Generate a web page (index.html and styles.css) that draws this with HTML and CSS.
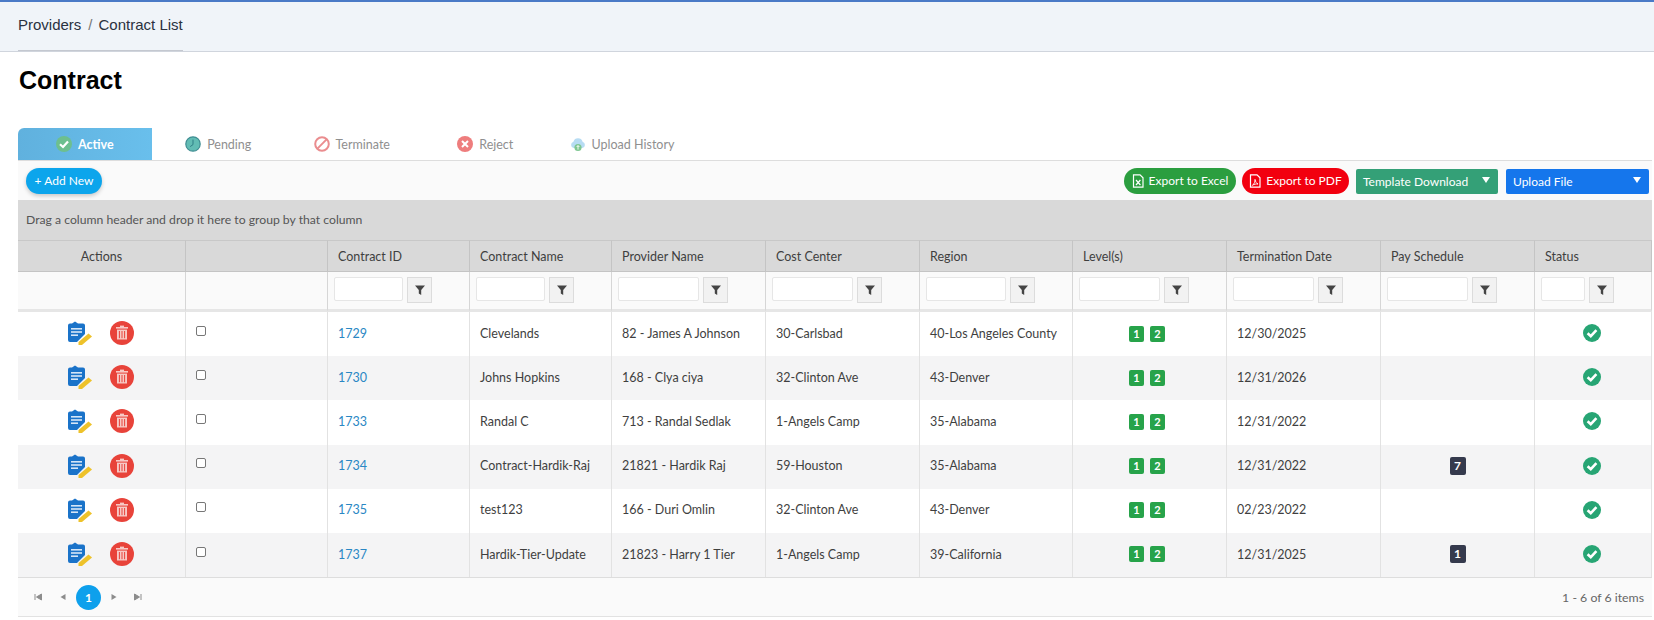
FILE: index.html
```html
<!DOCTYPE html>
<html lang="en">
<head>
<meta charset="utf-8">
<title>Contract List</title>
<link rel="stylesheet" href="styles.css">
</head>
<body>
<svg class="defs" width="0" height="0" aria-hidden="true">
  <symbol id="i-edit" viewBox="0 0 24 24">
    <path d="M7 0.5 L10 2.5 H15 A2 2 0 0 1 17 4.5 V13 L9 21 H2 A2 2 0 0 1 0 19 V4.5 A2 2 0 0 1 2 2.5 H4 Z" fill="#1a73c9"/>
    <rect x="3" y="7" width="11" height="1.6" fill="#d5e6f7"/>
    <rect x="3" y="10.2" width="11" height="1.6" fill="#d5e6f7"/>
    <rect x="3" y="13.4" width="7" height="1.6" fill="#d5e6f7"/>
    <path d="M20.5 12.5 L24 15.5 L14 24 L10.5 24 L10.5 21 Z" fill="#eec22a"/>
  </symbol>
  <symbol id="i-del" viewBox="0 0 24 24">
    <circle cx="12" cy="12" r="12" fill="#e8433a"/>
    <rect x="6" y="6" width="12" height="1.6" fill="#f7c9c5"/>
    <rect x="10" y="4.6" width="4" height="1.6" fill="#f7c9c5"/>
    <path d="M7 8.6 H17 V18.5 H7 Z" fill="#f7c9c5"/>
    <path d="M9.4 10 V17.2 M12 10 V17.2 M14.6 10 V17.2" stroke="#e8433a" stroke-width="1"/>
  </symbol>
  <symbol id="i-filter" viewBox="0 0 12 12">
    <path d="M1 1.5 H11 L7.2 6 V11 L4.8 9.6 V6 Z" fill="#444"/>
  </symbol>
  <symbol id="i-ok" viewBox="0 0 18 18">
    <circle cx="9" cy="9" r="9" fill="#27a574"/>
    <path d="M4.6 9.2 L7.8 12.2 L13.4 6.2" fill="none" stroke="#fff" stroke-width="2.6"/>
  </symbol>
  <symbol id="i-file" viewBox="0 0 12 14">
    <path d="M1.5 .8 H8 L11 3.8 V13.2 H1.5 Z" fill="none" stroke="#fff" stroke-width="1.2"/>
    <path d="M4 6 L8.4 11 M8.4 6 L4 11" stroke="#fff" stroke-width="1.2"/>
  </symbol>
  <symbol id="i-pdf" viewBox="0 0 12 14">
    <path d="M1.5 .8 H8 L11 3.8 V13.2 H1.5 Z" fill="none" stroke="#fff" stroke-width="1.2"/>
    <path d="M3.4 11.4 C5.4 9.6 6.2 7.6 6 5.4 C6.6 8 7.4 9.4 9 10 C7 9.8 5 10.2 3.4 11.4 Z" fill="none" stroke="#fff" stroke-width=".9"/>
  </symbol>
</svg>

<nav class="topbar">
  <div class="crumbs"><a class="crumb">Providers</a><span class="sep">/</span><a class="crumb">Contract List</a></div>
</nav>

<main class="page">
  <h1 class="title">Contract</h1>

  <div class="tabs">
    <a class="tab tab-on">
      <svg class="tab-ico" viewBox="0 0 16 16"><circle cx="8" cy="8" r="8" fill="#6dbf8f"/><path d="M4 8.3 L7 11 L12 5.4" fill="none" stroke="#fff" stroke-width="2.2"/></svg>Active</a>
    <a class="tab">
      <svg class="tab-ico" viewBox="0 0 16 16"><circle cx="8" cy="8" r="7.2" fill="#62bcb4" stroke="#3f8d92" stroke-width="1.2"/><path d="M8 3.6 V8.6 L5.2 10.6" fill="none" stroke="#2f7f86" stroke-width="1"/></svg>Pending</a>
    <a class="tab">
      <svg class="tab-ico" viewBox="0 0 16 16"><circle cx="8" cy="8" r="6.8" fill="none" stroke="#ea8d8f" stroke-width="2"/><path d="M3.4 12.6 L12.6 3.4" stroke="#ea8d8f" stroke-width="2"/></svg>Terminate</a>
    <a class="tab">
      <svg class="tab-ico" viewBox="0 0 16 16"><circle cx="8" cy="8" r="8" fill="#ee7d7d"/><path d="M5 5 L11 11 M11 5 L5 11" stroke="#fff" stroke-width="2"/></svg>Reject</a>
    <a class="tab tab-wide">
      <svg class="tab-ico" viewBox="0 0 16 16"><path d="M3.6 12 A3.2 3.2 0 0 1 3.4 5.8 A4.8 4.8 0 0 1 12.6 5.8 A3.2 3.2 0 0 1 12.4 12 Z" fill="#b7dcf3"/><circle cx="8" cy="11.5" r="3.6" fill="#7fc792"/><path d="M8 13.6 V9.6 M6.6 11 L8 9.6 L9.4 11" fill="none" stroke="#fff" stroke-width=".9"/></svg>Upload History</a>
  </div>

  <div class="toolbar">
    <button class="pill pill-add">+ Add New</button>
    <div class="toolbar-right">
      <button class="pill pill-excel"><svg class="btn-ico"><use href="#i-file"/></svg>Export to Excel</button>
      <button class="pill pill-pdf"><svg class="btn-ico"><use href="#i-pdf"/></svg>Export to PDF</button>
      <button class="drop drop-tpl">Template Download<span class="caret"></span></button>
      <button class="drop drop-up">Upload File<span class="caret"></span></button>
    </div>
  </div>

  <div class="group-bar">Drag a column header and drop it here to group by that column</div>

  <table class="grid">
    <colgroup>
      <col class="c-act"><col class="c-chk"><col class="c-id"><col class="c-name"><col class="c-std">
      <col class="c-std"><col class="c-reg"><col class="c-std"><col class="c-std"><col class="c-std"><col class="c-last">
    </colgroup>
    <thead>
      <tr class="head">
        <th class="center">Actions</th><th></th><th>Contract ID</th><th>Contract Name</th><th>Provider Name</th><th>Cost Center</th><th>Region</th><th>Level(s)</th><th>Termination Date</th><th>Pay Schedule</th><th>Status</th>
      </tr>
      <tr class="filters">
        <td></td><td></td>
        <td><div class="flt"><input class="flt-in"><span class="flt-btn"><svg class="flt-ico"><use href="#i-filter"/></svg></span></div></td>
        <td><div class="flt"><input class="flt-in"><span class="flt-btn"><svg class="flt-ico"><use href="#i-filter"/></svg></span></div></td>
        <td><div class="flt"><input class="flt-in"><span class="flt-btn"><svg class="flt-ico"><use href="#i-filter"/></svg></span></div></td>
        <td><div class="flt"><input class="flt-in"><span class="flt-btn"><svg class="flt-ico"><use href="#i-filter"/></svg></span></div></td>
        <td><div class="flt"><input class="flt-in"><span class="flt-btn"><svg class="flt-ico"><use href="#i-filter"/></svg></span></div></td>
        <td><div class="flt"><input class="flt-in"><span class="flt-btn"><svg class="flt-ico"><use href="#i-filter"/></svg></span></div></td>
        <td><div class="flt"><input class="flt-in"><span class="flt-btn"><svg class="flt-ico"><use href="#i-filter"/></svg></span></div></td>
        <td><div class="flt"><input class="flt-in"><span class="flt-btn"><svg class="flt-ico"><use href="#i-filter"/></svg></span></div></td>
        <td><div class="flt"><input class="flt-in"><span class="flt-btn"><svg class="flt-ico"><use href="#i-filter"/></svg></span></div></td>
      </tr>
    </thead>
    <tbody>
      <tr>
        <td><div class="acts"><svg class="act"><use href="#i-edit"/></svg><svg class="act"><use href="#i-del"/></svg></div></td>
        <td class="chk-cell"><input type="checkbox" class="chk"></td>
        <td><a class="link">1729</a></td><td>Clevelands</td><td>82 - James A Johnson</td><td>30-Carlsbad</td><td>40-Los Angeles County</td>
        <td class="center lvl-cell"><span class="lvl">1</span><span class="lvl">2</span></td><td>12/30/2025</td><td class="center"></td>
        <td class="center ok-cell"><svg class="ok"><use href="#i-ok"/></svg></td>
      </tr>
      <tr>
        <td><div class="acts"><svg class="act"><use href="#i-edit"/></svg><svg class="act"><use href="#i-del"/></svg></div></td>
        <td class="chk-cell"><input type="checkbox" class="chk"></td>
        <td><a class="link">1730</a></td><td>Johns Hopkins</td><td>168 - Clya ciya</td><td>32-Clinton Ave</td><td>43-Denver</td>
        <td class="center lvl-cell"><span class="lvl">1</span><span class="lvl">2</span></td><td>12/31/2026</td><td class="center"></td>
        <td class="center ok-cell"><svg class="ok"><use href="#i-ok"/></svg></td>
      </tr>
      <tr>
        <td><div class="acts"><svg class="act"><use href="#i-edit"/></svg><svg class="act"><use href="#i-del"/></svg></div></td>
        <td class="chk-cell"><input type="checkbox" class="chk"></td>
        <td><a class="link">1733</a></td><td>Randal C</td><td>713 - Randal Sedlak</td><td>1-Angels Camp</td><td>35-Alabama</td>
        <td class="center lvl-cell"><span class="lvl">1</span><span class="lvl">2</span></td><td>12/31/2022</td><td class="center"></td>
        <td class="center ok-cell"><svg class="ok"><use href="#i-ok"/></svg></td>
      </tr>
      <tr>
        <td><div class="acts"><svg class="act"><use href="#i-edit"/></svg><svg class="act"><use href="#i-del"/></svg></div></td>
        <td class="chk-cell"><input type="checkbox" class="chk"></td>
        <td><a class="link">1734</a></td><td>Contract-Hardik-Raj</td><td>21821 - Hardik Raj</td><td>59-Houston</td><td>35-Alabama</td>
        <td class="center lvl-cell"><span class="lvl">1</span><span class="lvl">2</span></td><td>12/31/2022</td><td class="center"><span class="pay">7</span></td>
        <td class="center ok-cell"><svg class="ok"><use href="#i-ok"/></svg></td>
      </tr>
      <tr>
        <td><div class="acts"><svg class="act"><use href="#i-edit"/></svg><svg class="act"><use href="#i-del"/></svg></div></td>
        <td class="chk-cell"><input type="checkbox" class="chk"></td>
        <td><a class="link">1735</a></td><td>test123</td><td>166 - Duri Omlin</td><td>32-Clinton Ave</td><td>43-Denver</td>
        <td class="center lvl-cell"><span class="lvl">1</span><span class="lvl">2</span></td><td>02/23/2022</td><td class="center"></td>
        <td class="center ok-cell"><svg class="ok"><use href="#i-ok"/></svg></td>
      </tr>
      <tr>
        <td><div class="acts"><svg class="act"><use href="#i-edit"/></svg><svg class="act"><use href="#i-del"/></svg></div></td>
        <td class="chk-cell"><input type="checkbox" class="chk"></td>
        <td><a class="link">1737</a></td><td>Hardik-Tier-Update</td><td>21823 - Harry 1 Tier</td><td>1-Angels Camp</td><td>39-California</td>
        <td class="center lvl-cell"><span class="lvl">1</span><span class="lvl">2</span></td><td>12/31/2025</td><td class="center"><span class="pay">1</span></td>
        <td class="center ok-cell"><svg class="ok"><use href="#i-ok"/></svg></td>
      </tr>
    </tbody>
  </table>

  <div class="pager">
    <div class="pager-nav">
      <svg class="pg" viewBox="0 0 8 8"><path d="M1 1 V7 M7.5 1 L2.5 4 L7.5 7 Z" fill="#8c8c8c" stroke="#8c8c8c"/></svg>
      <svg class="pg" viewBox="0 0 8 8"><path d="M6.5 1 L1.5 4 L6.5 7 Z" fill="#8c8c8c"/></svg>
      <span class="pg-cur">1</span>
      <svg class="pg" viewBox="0 0 8 8"><path d="M1.5 1 L6.5 4 L1.5 7 Z" fill="#8c8c8c"/></svg>
      <svg class="pg" viewBox="0 0 8 8"><path d="M7 1 V7 M.5 1 L5.5 4 L.5 7 Z" fill="#8c8c8c" stroke="#8c8c8c"/></svg>
    </div>
    <span class="pager-info">1 - 6 of 6 items</span>
  </div>
</main>
</body>
</html>
```
FILE: styles.css
```css
* { box-sizing: border-box; }

html, body { margin: 0; background: #fff; }

body {
  font-family: "Lato", "Liberation Sans", sans-serif;
  font-size: 12.5px;
  color: #444;
  height: 620px;
  overflow: hidden;
}

.defs { display: block; height: 0; }

.topbar {
  height: 52px;
  background: #f0f4f9;
  border-top: 2px solid #4a7ac7;
  border-bottom: 1px solid #d0d5dd;
  padding-left: 18px;
}

.crumbs {
  display: inline-flex;
  align-items: flex-start;
  height: 49px;
  padding: 14px 0 0 0;
  border-bottom: 1px solid #c4c8d0;
  font-family: "Liberation Sans", sans-serif;
  font-size: 15px;
  color: #2a3140;
}

.sep { margin: 0 6px 0 7px; color: #777; }

.page { padding: 0 2px 0 18px; }

.title {
  margin: 0;
  padding: 14px 0 0 1px;
  height: 76px;
  font-family: "Liberation Sans", sans-serif;
  font-size: 25px;
  line-height: 28px;
  font-weight: 700;
  color: #000;
}

.tabs {
  display: flex;
  height: 33px;
  border-bottom: 1px solid #ddd;
}

.tab {
  width: 133.5px;
  height: 32px;
  display: flex;
  align-items: center;
  justify-content: center;
  gap: 6px;
  color: #8f8f8f;
  font-size: 12.5px;
}

.tab-wide { width: 140px; }

.tab-on {
  background: linear-gradient(90deg, #60b1de, #69bfec);
  color: #fff;
  font-weight: 700;
  border-radius: 6px 0 0 0;
}

.tab-ico { width: 16px; height: 16px; flex: none; }

.toolbar {
  height: 39px;
  padding: 7px 3px 0 8px;
  display: flex;
  justify-content: space-between;
  align-items: flex-start;
  background: #fafafa;
}

.toolbar-right { display: flex; align-items: flex-start; }

.pill, .drop {
  font-family: inherit;
  font-size: 12px;
  color: #fff;
  border: 0;
  padding: 0 0 1px;
  display: flex;
  align-items: center;
}

.pill {
  height: 26px;
  border-radius: 13px;
  justify-content: center;
}

.pill-add {
  width: 76px;
  background: #0ca5ec;
  box-shadow: 0 2px 4px rgba(0, 0, 0, .2);
}

.pill-excel { width: 112px; background: #2b9e3f; margin-right: 6px; }
.pill-pdf { width: 107px; background: #f2000f; margin-right: 7px; }

.btn-ico { width: 12px; height: 14px; margin-right: 5px; }

.drop {
  height: 25px;
  margin-top: 1px;
  border-radius: 2px;
  padding: 0 8px 1px 7px;
  justify-content: space-between;
}

.drop-tpl { width: 142px; background: #34a077; margin-right: 8px; }
.drop-up { width: 143px; background: #1576ec; }

.caret {
  width: 0;
  height: 0;
  border-left: 4px solid transparent;
  border-right: 4px solid transparent;
  border-top: 6px solid #fff;
  margin-top: -3px;
}

.group-bar {
  height: 40px;
  padding: 12px 0 0 8px;
  background: #d9d9d9;
  color: #555;
  font-size: 12.2px;
  line-height: 15px;
}

.grid {
  width: 1634px;
  table-layout: fixed;
  border-collapse: separate;
  border-spacing: 0;
}

.c-act { width: 168px; }
.c-chk { width: 142px; }
.c-id { width: 142px; }
.c-name { width: 142px; }
.c-std { width: 154px; }
.c-reg { width: 153px; }
.c-last { width: 117px; }

.grid th, .grid td {
  padding: 0 0 0 10px;
  border-right: 1px solid #ddd;
  text-align: left;
  white-space: nowrap;
  overflow: hidden;
}

.grid th {
  height: 32px;
  background: #d9d9d9;
  border-top: 1px solid #c8c8c8;
  border-bottom: 1px solid #c4c4c4;
  border-right-color: #c4c4c4;
  font-weight: 400;
  color: #3f3f3f;
  font-size: 12.5px;
}

.grid .center { text-align: center; padding-left: 0; }

.filters td {
  height: 40px;
  background: #fafafa;
  padding: 0;
  border-bottom: 3px solid #e6e6e6;
  border-right-color: #d6d6d6;
}

.flt {
  display: flex;
  gap: 4px;
  padding: 0 37px 0 6px;
  margin-top: -1px;
}

.flt-in {
  flex: 1;
  min-width: 0;
  height: 24px;
  border: 1px solid #e6e6e6;
  border-radius: 2px;
  background: #fff;
  padding: 0;
}

.flt-btn {
  flex: none;
  width: 25px;
  height: 26px;
  background: #f2f2f2;
  border: 1px solid #dcdcdc;
  display: flex;
  align-items: center;
  justify-content: center;
}

.flt-ico { width: 12px; height: 12px; }

.grid tbody td {
  height: 44.2px;
  padding-bottom: 2px;
  font-size: 12.5px;
  color: #3f3f3f;
  background: #fff;
  border-right-color: #e2e2e2;
}

.grid tbody tr:nth-child(even) td { background: #f4f4f5; }

.grid .lvl-cell { padding-right: 5px; }
.grid .ok-cell { padding-right: 2px; }

.acts {
  display: flex;
  justify-content: center;
  gap: 18px;
  margin-left: -12px;
}

.act { width: 24px; height: 24px; }

.chk-cell { vertical-align: middle; }

.chk {
  appearance: none;
  display: block;
  width: 10px;
  height: 10px;
  margin: -5px 0 0 0;
  border: 1px solid #777;
  border-radius: 2px;
  background: #fff;
}

.link { color: #2a87c4; }

.lvl {
  display: inline-block;
  width: 15px;
  height: 16px;
  margin: 0 3px;
  border-radius: 2px;
  background: #27a34a;
  color: #fff;
  font-size: 11px;
  font-weight: 700;
  line-height: 16px;
  text-align: center;
  vertical-align: middle;
}

.pay {
  display: inline-block;
  width: 16px;
  height: 18px;
  border-radius: 2px;
  background: #353a4d;
  color: #fff;
  font-size: 12px;
  font-weight: 700;
  line-height: 18px;
  text-align: center;
  vertical-align: middle;
}

.ok { width: 18px; height: 18px; vertical-align: middle; }

.pager {
  height: 40px;
  background: #fafafa;
  border-top: 1px solid #ddd;
  border-bottom: 1px solid #e2e2e2;
  display: flex;
  align-items: center;
  justify-content: space-between;
  padding: 0 8px 0 16px;
  color: #666;
}

.pager-nav { display: flex; align-items: center; }

.pg { width: 8px; height: 8px; margin-right: 17px; }
.pg:nth-child(2) { margin-right: 9px; }
.pg:nth-child(4) { margin-left: -9px; margin-right: 16px; }

.pg-cur {
  width: 25px;
  height: 25px;
  border-radius: 50%;
  background: #0ea0ec;
  color: #fff;
  font-size: 12px;
  font-weight: 700;
  line-height: 25px;
  text-align: center;
  margin-right: 18px;
}

.pager-info { font-size: 12.3px; }
```
